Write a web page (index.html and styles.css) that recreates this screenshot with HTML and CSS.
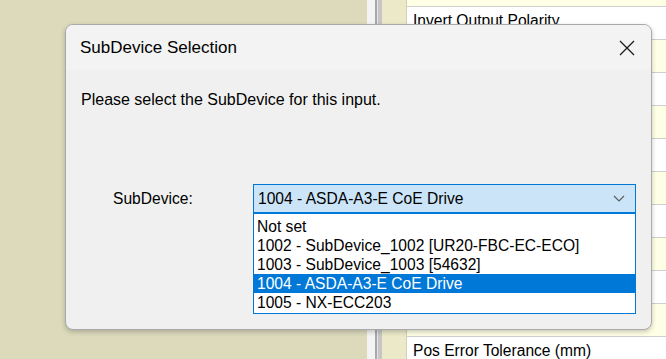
FILE: index.html
```html
<!DOCTYPE html>
<html>
<head>
<meta charset="utf-8">
<link rel="stylesheet" href="styles.css">
</head>
<body>
<div class="desk">
  <div class="olive"></div>
  <div class="scroll"><span class="s1"></span><span class="s2"></span><span class="s3"></span><span class="s4"></span></div>
  <div class="gutter"></div>
  <div class="grid">
    <div class="row cream top"></div>
    <div class="row white">Invert Output Polarity</div>
    <div class="row cream"></div>
    <div class="row white"></div>
    <div class="row cream"></div>
    <div class="row white"></div>
    <div class="row cream"></div>
    <div class="row white"></div>
    <div class="row cream"></div>
    <div class="row white"></div>
    <div class="row cream"></div>
    <div class="row white">Pos Error Tolerance (mm)</div>
  </div>
</div>

<div class="dialog">
  <div class="titlebar">
    <span class="title">SubDevice Selection</span>
    <svg class="close" width="16" height="16" viewBox="0 0 16 16"><path d="M1 1 L15 15 M15 1 L1 15" stroke="#1a1a1a" stroke-width="1.3" fill="none"/></svg>
  </div>
  <div class="dbody">
    <p class="prompt">Please select the SubDevice for this input.</p>
    <div class="field">
      <span class="label">SubDevice:</span>
      <div class="combo-wrap">
        <div class="combo">
          <span>1004 - ASDA-A3-E CoE Drive</span>
          <svg class="chev" width="12" height="7" viewBox="0 0 12 7"><path d="M1 1 L6 6 L11 1" stroke="#5a5a5a" stroke-width="1.1" fill="none"/></svg>
        </div>
        <ul class="list">
          <li>Not set</li>
          <li>1002 - SubDevice_1002 [UR20-FBC-EC-ECO]</li>
          <li>1003 - SubDevice_1003 [54632]</li>
          <li class="sel">1004 - ASDA-A3-E CoE Drive</li>
          <li>1005 - NX-ECC203</li>
        </ul>
      </div>
    </div>
  </div>
</div>
</body>
</html>
```

FILE: styles.css
```css
html, body {
  margin: 0;
  padding: 0;
  width: 666px;
  height: 359px;
  overflow: hidden;
  font-family: "Liberation Sans", Arial, sans-serif;
  font-size: 15.6px;
  color: #000;
}

.desk {
  display: flex;
  height: 359px;
}

.olive {
  width: 367px;
  background: #dcdabb;
}

.scroll {
  display: flex;
  width: 15px;
}
.scroll .s1 { width: 8px; background: #f3f3f3; }
.scroll .s2 { width: 2px; background: #a8a8a8; }
.scroll .s3 { width: 1px; background: #e4e4e4; }
.scroll .s4 { width: 4px; background: #c6c6c6; }

.gutter {
  width: 24px;
  background: #ebe9c8;
  border-right: 1px solid #d2d0b4;
}

.grid {
  flex: 1;
  display: flex;
  flex-direction: column;
  overflow: hidden;
}

.row {
  flex: none;
  height: 32px;
  border-top: 1px solid #cfcfcf;
  padding: 5px 0 0 6px;
  box-sizing: content-box;
  line-height: 18px;
  white-space: nowrap;
}
.row.top {
  height: 6px;
  padding: 0;
  border-top: none;
}
.row.cream { background: #ffffe6; height: 27px; }
.row.white { background: #ffffff; height: 27px; }
.row.top.cream { height: 6px; }

.dialog {
  position: absolute;
  left: 65px;
  top: 24px;
  width: 585px;
  height: 304px;
  border: 1px solid #a9a9a9;
  border-radius: 8px;
  background: #f0f0f0;
  box-shadow: 0 2px 5px rgba(0, 0, 0, 0.22);
  overflow: hidden;
}

.titlebar {
  height: 45px;
  background: #f3f3f3;
  display: flex;
  align-items: center;
  justify-content: space-between;
  padding: 0 16px 0 14px;
}

.title {
  font-size: 17px;
}

.close {
  display: block;
}

.dbody {
  padding: 0 0 0 15px;
}

.prompt {
  margin: 20px 0 0 0;
  line-height: 20px;
  font-size: 16px;
}

.field {
  display: flex;
  align-items: flex-start;
  margin-top: 74px;
  padding-left: 32px;
}

.label {
  width: 140px;
  line-height: 29px;
}

.combo-wrap {
  width: 383px;
}

.combo {
  box-sizing: border-box;
  height: 29px;
  border: 1px solid #0078d7;
  background: #cce4f7;
  display: flex;
  align-items: center;
  justify-content: space-between;
  padding: 0 10px 0 4px;
}

.chev {
  display: block;
}

.list {
  list-style: none;
  margin: 0;
  padding: 3px 0 1px 0;
  border: 1px solid #0078d7;
  border-top-color: #0078d7;
  background: #ffffff;
}

.list li {
  height: 19px;
  line-height: 19px;
  padding-left: 3px;
  white-space: nowrap;
}

.list li.sel {
  background: #0078d7;
  color: #ffffff;
}
```
